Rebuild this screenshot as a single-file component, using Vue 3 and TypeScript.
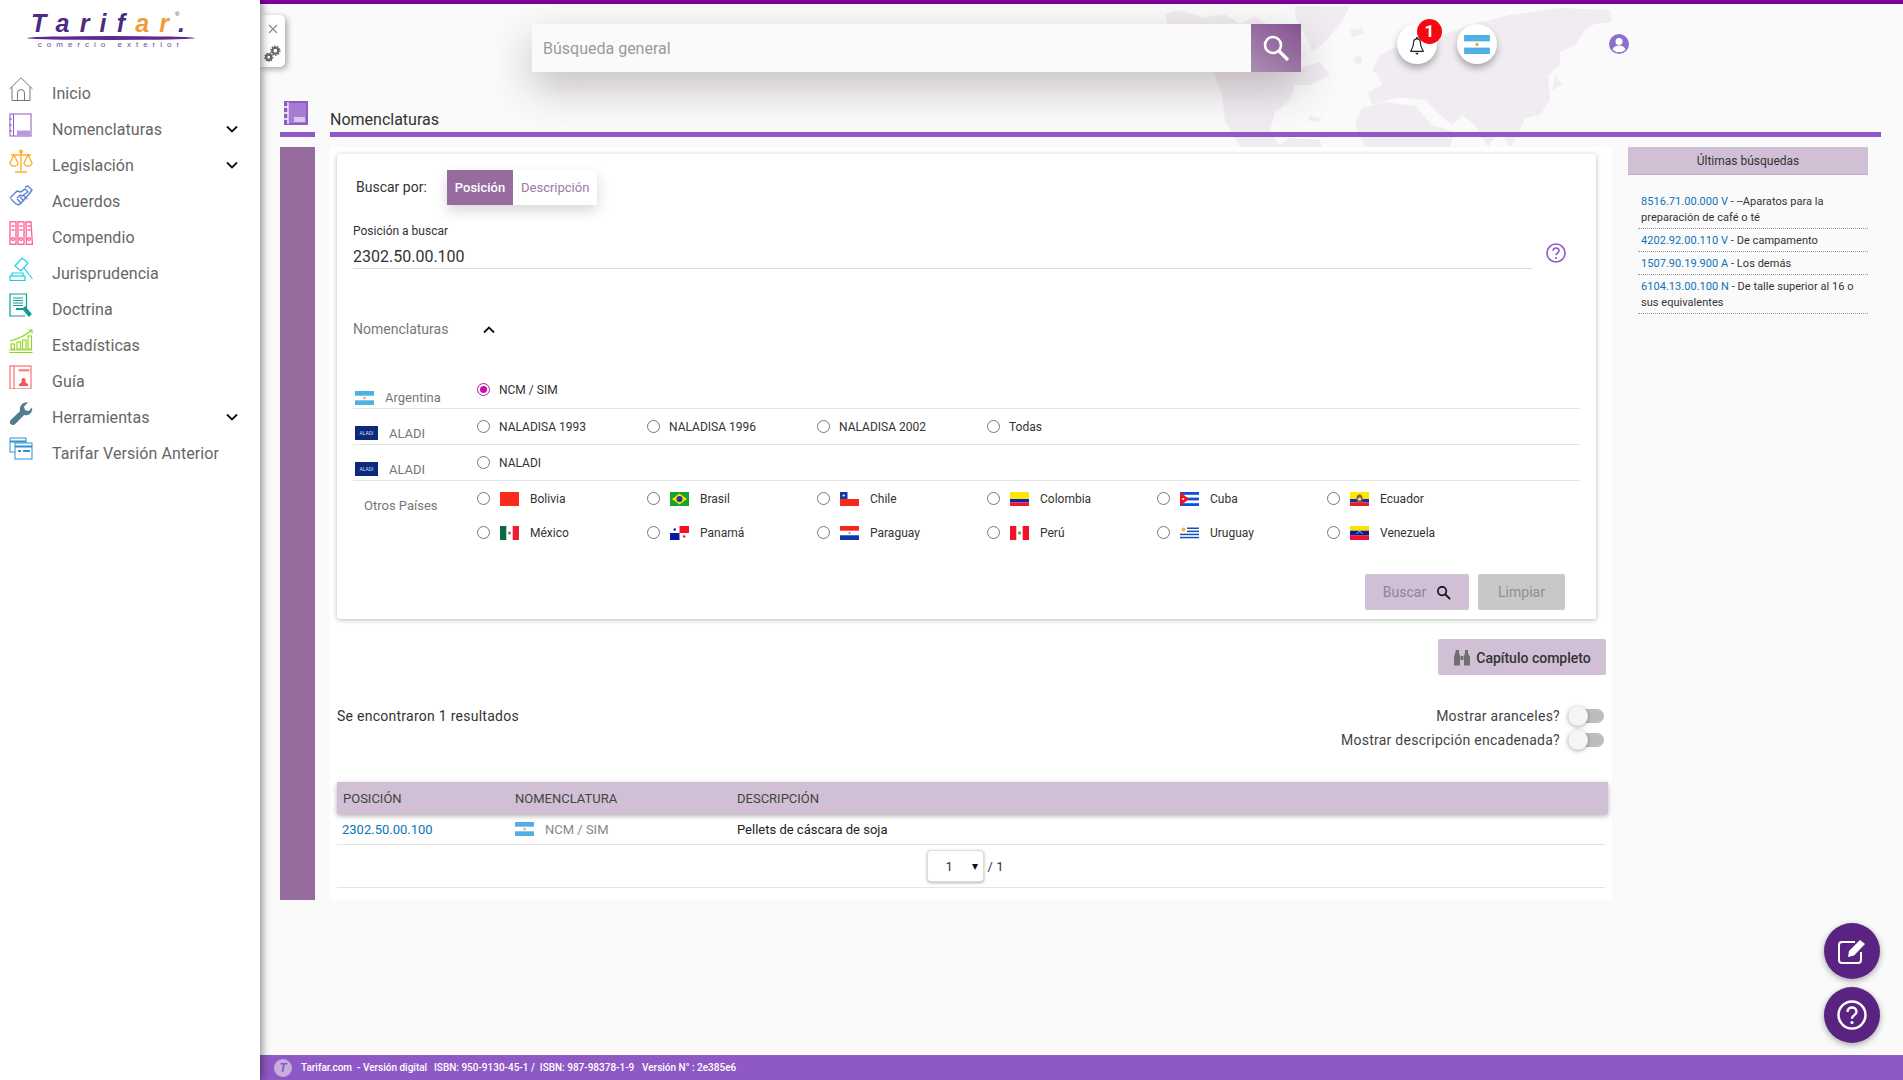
<script setup lang="ts">
const menu = [
  { label: 'Inicio', icon: 'home', arrow: false },
  { label: 'Nomenclaturas', icon: 'book', arrow: true },
  { label: 'Legislación', icon: 'scale', arrow: true },
  { label: 'Acuerdos', icon: 'hands', arrow: false },
  { label: 'Compendio', icon: 'books', arrow: false },
  { label: 'Jurisprudencia', icon: 'gavel', arrow: false },
  { label: 'Doctrina', icon: 'doc', arrow: false },
  { label: 'Estadísticas', icon: 'chart', arrow: false },
  { label: 'Guía', icon: 'guide', arrow: false },
  { label: 'Herramientas', icon: 'wrench', arrow: true },
  { label: 'Tarifar Versión Anterior', icon: 'windows', arrow: false },
]

const flagSvg: Record<string, string> = {
  ar: '<rect width="19" height="14" fill="#fff"/><rect width="19" height="4.7" fill="#4fb0e6"/><rect y="9.3" width="19" height="4.7" fill="#4fb0e6"/><circle cx="9.5" cy="7" r="1.2" fill="#f6a623"/>',
  bo: '<rect width="19" height="14" fill="#fb2a1b"/>',
  br: '<rect width="19" height="14" fill="#16a32f"/><path d="M9.5 1.5 17 7l-7.5 5.5L2 7z" fill="#fde100"/><circle cx="9.5" cy="7" r="3" fill="#1d3f96"/>',
  cl: '<rect width="19" height="14" fill="#fff"/><rect y="7" width="19" height="7" fill="#f6291b"/><rect width="7.5" height="7" fill="#1338a8"/><circle cx="3.7" cy="3.5" r="1.1" fill="#fff"/>',
  co: '<rect width="19" height="7" fill="#ffe600"/><rect y="7" width="19" height="3.5" fill="#1020b0"/><rect y="10.5" width="19" height="3.5" fill="#f0182a"/>',
  cu: '<rect width="19" height="14" fill="#fff"/><rect width="19" height="2.8" fill="#0a4fe0"/><rect y="5.6" width="19" height="2.8" fill="#0a4fe0"/><rect y="11.2" width="19" height="2.8" fill="#0a4fe0"/><path d="M0 0 9 7 0 14z" fill="#f5101e"/><circle cx="3.2" cy="7" r="1.1" fill="#fff"/>',
  ec: '<rect width="19" height="7" fill="#ffe600"/><rect y="7" width="19" height="3.5" fill="#1030b0"/><rect y="10.5" width="19" height="3.5" fill="#f0182a"/><ellipse cx="9.5" cy="7" rx="3" ry="4.5" fill="#8a5a3a"/><circle cx="9.5" cy="7" r="1.6" fill="#cfe3f0"/>',
  mx: '<rect width="19" height="14" fill="#fff"/><rect width="6.3" height="14" fill="#0b6b46"/><rect x="12.7" width="6.3" height="14" fill="#f01c32"/><circle cx="9.5" cy="7" r="1.5" fill="#9a6a3a"/>',
  pa: '<rect width="19" height="14" fill="#fff"/><rect x="9.5" width="9.5" height="7" fill="#fb0d1b"/><rect y="7" width="9.5" height="7" fill="#0a1aa8"/><circle cx="4.7" cy="3.5" r="1.2" fill="#0a1aa8"/><circle cx="14.2" cy="10.5" r="1.2" fill="#fb0d1b"/>',
  py: '<rect width="19" height="14" fill="#fff"/><rect width="19" height="4.7" fill="#f5271b"/><rect y="9.3" width="19" height="4.7" fill="#0a38a8"/><circle cx="9.5" cy="7" r="1" fill="#6a9a6a"/>',
  pe: '<rect width="19" height="14" fill="#fff"/><rect width="6.3" height="14" fill="#f6102a"/><rect x="12.7" width="6.3" height="14" fill="#f6102a"/><circle cx="9.5" cy="7" r="1.8" fill="#6aaa7a"/>',
  uy: '<rect width="19" height="14" fill="#fff"/><rect y="1.5" x="7" width="12" height="1.5" fill="#1850b8"/><rect y="4.6" x="7" width="12" height="1.5" fill="#1850b8"/><rect y="7.7" width="19" height="1.5" fill="#1850b8"/><rect y="10.8" width="19" height="1.5" fill="#1850b8"/><circle cx="3.5" cy="3.5" r="2" fill="#f0b93a"/>',
  ve: '<rect width="19" height="4.7" fill="#ffdf00"/><rect y="4.7" width="19" height="4.7" fill="#0a1e90"/><rect y="9.3" width="19" height="4.7" fill="#ee1038"/><path d="M6.5 8 9.5 5l3 3" fill="none" stroke="#fff" stroke-width=".7"/>',
}

const countries = [
  { name: 'Bolivia', code: 'bo' },
  { name: 'Brasil', code: 'br' },
  { name: 'Chile', code: 'cl' },
  { name: 'Colombia', code: 'co' },
  { name: 'Cuba', code: 'cu' },
  { name: 'Ecuador', code: 'ec' },
  { name: 'México', code: 'mx' },
  { name: 'Panamá', code: 'pa' },
  { name: 'Paraguay', code: 'py' },
  { name: 'Perú', code: 'pe' },
  { name: 'Uruguay', code: 'uy' },
  { name: 'Venezuela', code: 've' },
]

const recent = [
  { code: '8516.71.00.000 V', text: ' - --Aparatos para la preparación de café o té' },
  { code: '4202.92.00.110 V', text: ' - De campamento' },
  { code: '1507.90.19.900 A', text: ' - Los demás' },
  { code: '6104.13.00.100 N', text: ' - De talle superior al 16 o sus equivalentes' },
]
</script>

<template>
  <div class="app">
    <aside class="sidebar">
      <div class="logo">
        <div class="logo-word">Tarif<span class="logo-or">ar</span>.<span class="logo-r">®</span></div>
        <div class="logo-swoosh"></div>
        <div class="logo-sub">comercio exterior</div>
      </div>
      <nav class="menu">
        <div v-for="m in menu" :key="m.label" class="menu-item">
          <svg class="menu-icon" viewBox="0 0 24 24" fill="none" stroke-width="1">
            <g v-if="m.icon === 'home'" stroke="#777"><path d="M.5 12 12 .8 23.5 12"/><path d="M3 10v13.5h18V10"/><path d="M8.5 23.5V16a3.5 3.5 0 0 1 7 0v7.5"/></g>
            <g v-else-if="m.icon === 'book'" stroke="#8e59c5"><rect x="1" y="1" width="21" height="22"/><path d="M4.5 1v22M0 6h3M0 12h3M0 18h3"/><path d="M8 17.5h13v5H8z" fill="#b89ad9" stroke="none"/></g>
            <g v-else-if="m.icon === 'scale'" stroke="#fbae2c" stroke-width="1.3"><path d="M12 2v20M6 23h12M2 6h20"/><circle cx="12" cy="2.5" r="1.4"/><path d="M5 6 1 14a4 3 0 0 0 8 0zM19 6l-4 8a4 3 0 0 0 8 0z"/></g>
            <g v-else-if="m.icon === 'hands'" stroke="#5c7fd8" stroke-width="1.4"><path d="m1 13 7-7 4 1 4-3 3 3-6 4-2-1-3 3"/><path d="m16 2 3-1 4 4-2 3-8 9-3 3-3-1-5-5"/><path d="m8 14 4 4M11 12l4 4M14 10l4 4"/></g>
            <g v-else-if="m.icon === 'books'" stroke="#fb5f94" stroke-width="1.3"><rect x="1" y=".8" width="6" height="22.500"/><rect x="9" y=".8" width="6" height="22.500"/><path d="m17 1 5-.2 1.400 22.500h-6z"/><path d="M2.500 5h3M10.500 5h3M18.500 5h3M2.500 9h3M10.500 9h3M18.500 9h3"/><circle cx="4" cy="18" r="1.400"/><circle cx="12" cy="18" r="1.400"/><circle cx="20" cy="18" r="1.400"/></g>
            <g v-else-if="m.icon === 'gavel'" stroke="#1ccfe8" stroke-width="1.2"><rect x="1" y="19" width="15" height="4.500"/><path d="M3 19v-3h11v3"/><path d="m6 9 7-8 6 5-7 8zM15 11l8.500 11"/></g>
            <g v-else-if="m.icon === 'doc'" stroke="#0a9f91" stroke-width="1.2"><path d="M17.500 17V1H1v22h15"/><path d="M4 5h10M4 7.500h10M4 10h10M4 12.500h10"/><path d="M7 16h7" stroke-width="2"/><path d="m16 14 6 7-2 2-6-7z" fill="#0a9f91"/></g>
            <g v-else-if="m.icon === 'chart'" stroke="#8fd31a" stroke-width="1.1"><path d="M.5 23.500h23M.5 21h23"/><rect x="2" y="15" width="3.500" height="5"/><rect x="8" y="13" width="3.500" height="7"/><rect x="13.500" y="11" width="3.500" height="9"/><rect x="19" y="7" width="3.500" height="13"/><path d="M1 12C9 10 16 7 23 1"/><path d="M19.500 1H23v3.500"/></g>
            <g v-else-if="m.icon === 'guide'" stroke="#f55656"><rect x="1" y="1" width="21" height="23"/><path d="M5 1v23"/><path d="M9.500 4h11v2.500h-11z" fill="#f89090" stroke="none"/><path d="M10 21h9v-2l-2.500-1.500V15a2 2 0 0 0-4 0v2.500L10 19z" fill="#f55656" stroke="none"/></g>
            <path v-else-if="m.icon === 'wrench'" d="M23 6.500c.6 2.500-.2 5-2.200 6.500-1.700 1.300-3.800 1.500-5.700.9L6 23.200c-1.300 1.200-3.200 1.100-4.400-.1-1.100-1.200-1-3 .2-4.200l9.300-9c-.7-2-.3-4.300 1.200-6C14 1.800 16.700.7 19.200 1.300L15 5.500l1 3.700 3.800.9z" fill="#527d93"/>
            <g v-else stroke="#2c93d2"><rect x="1" y="1" width="16" height="14"/><path d="M1 4.500h16" stroke-width="2"/><rect x="6" y="6" width="17" height="16" fill="#fff"/><path d="M6 9.500h17" stroke-width="2"/><path d="M9 14h3M14 14h7" stroke-width="2"/></g>
          </svg>
          <span class="menu-label">{{ m.label }}</span>
          <svg v-if="m.arrow" class="menu-chev" viewBox="0 0 12 8"><path d="M1 1.500 6 6.500l5-5" fill="none" stroke="#111" stroke-width="1.800"/></svg>
        </div>
      </nav>
    </aside>

    <main class="main">
      <svg class="worldmap" viewBox="1160 4 470 143" aria-hidden="true">
        <g fill="#f0ecf2">
          <path d="M1165 14l13-4 22 6v29l-15-5-13 12-7 10 5-17-6-7 4-10z"/>
          <path d="M1200 18l25-4 15 10 15-8 20 14 15 4 10 14-10 14 10 6 20-6 10 13-20 10h-15l-5 15-15 12-5 18 10 17h-40l-15-27-3-25-12-35-10-15z"/>
          <path d="M1295 6h55l-10 18-15 18-13 10-6-16-10-16z"/>
          <path d="M1350 30l12-2 2 5-12 4z"/>
          <path d="M1372 70l8-15 15-7 20 2 15-10 40-15 40-10 50-7 50 2 2 12-17 2-10 6-10 15-15 7v13l-12 10 2 25-10 15-15 3-7 17-8 12-10-17-12 17-13-22-13-10-10 10-12-10-15-15-17-2-13 0-23 7-4-13 14-7-4-10z"/>
          <path d="M1362 108l23-6 30 4 17 19 23 7-5 15h-85l-10-22z"/>
          <path d="M1276 147l14-9 30 2 2 7z"/>
          <path d="M1556 75l6 10-10 5 2-8zM1354 58l7-4 1 8-6 3z"/>
          <path d="M1310 116l12 3-4 3-10-2z"/>
        </g>
      </svg>

      <div class="topline"></div>

      <header class="topbar">
        <div class="search">
          <div class="search-input">Búsqueda general</div>
          <button class="search-btn" type="button" aria-label="Buscar">
            <svg viewBox="0 0 30 30" width="30" height="30"><circle cx="12" cy="12" r="8" fill="none" stroke="#fff" stroke-width="2.600"/><path d="m18 18 9 9" stroke="#fff" stroke-width="3.200"/></svg>
          </button>
        </div>
        <div class="round bell">
          <svg class="bell-icon" viewBox="0 0 18 22" width="16" height="20"><path d="M9 3c3 0 4 2.500 4 5.500 0 4 2.500 6.500 3 8.500H2c.5-2 3-4.500 3-8.500C5 5.500 6 3 9 3z" fill="none" stroke="#222" stroke-width="1.300"/><path d="M7 18.500h4l-2 2.500zM8 1h2v2H8z" fill="#222"/></svg>
          <span class="badge">1</span>
        </div>
        <div class="round flagbtn">
          <svg viewBox="0 0 19 14" width="26" height="19"><g v-html="flagSvg.ar"></g></svg>
        </div>
        <svg class="user" viewBox="0 0 20 20"><circle cx="10" cy="10" r="10" fill="#8f6fce"/><circle cx="10" cy="7.500" r="3.500" fill="#fff"/><path d="M3.500 15.500c1-3 3.500-4 6.500-4s5.500 1 6.500 4a9 9 0 0 1-13 0z" fill="#fff"/></svg>
      </header>

      <div class="titlerow">
        <div class="title-icon">
          <svg viewBox="0 0 24 24" width="24" height="24" fill="none" stroke="#8e59c5" stroke-width="1.300"><rect x=".7" y=".7" width="22.600" height="22.600" fill="#8e59c5"/><rect x="5" y="2" width="17" height="20" fill="#a57bd3" stroke="none"/><path d="M4 1v22" stroke="#fff"/><path d="M0 6h4M0 12h4M0 18h4" stroke="#fff"/><path d="M10 16h11v5H10z" fill="#d8c7ea" stroke="none"/></svg>
        </div>
        <h1 class="title">Nomenclaturas</h1>
      </div>

      <div class="content">
        <div class="sidebar-strip"></div>
        <section class="panel">
          <div class="card">
            <div class="tabs-row">
              <span class="tabs-label">Buscar por:</span>
              <div class="tabs">
                <span class="tab active">Posición</span>
                <span class="tab">Descripción</span>
              </div>
            </div>

            <div class="field">
              <div class="field-main">
                <div class="field-label">Posición a buscar</div>
                <div class="field-value">2302.50.00.100</div>
              </div>
              <svg class="field-help" viewBox="0 0 20 20"><circle cx="10" cy="10" r="9" fill="none" stroke="#8e59c5" stroke-width="1.600"/><path d="M7 7.800C7 5.800 8.500 5 10 5s3 1 3 2.800c0 2.200-3 2.200-3 4.400" fill="none" stroke="#8e59c5" stroke-width="1.600"/><circle cx="10" cy="15" r="1.100" fill="#8e59c5"/></svg>
            </div>

            <div class="acc">
              <span>Nomenclaturas</span>
              <svg viewBox="0 0 12 8" width="12" height="8"><path d="M1 6.500 6 1.500l5 5" fill="none" stroke="#111" stroke-width="1.800"/></svg>
            </div>

            <div class="nrow">
              <div class="nrow-left nrow-ar">
                <svg class="lflag" viewBox="0 0 19 14"><g v-html="flagSvg.ar"></g></svg>
                <span>Argentina</span>
              </div>
              <div class="opts">
                <label class="opt"><span class="radio on"></span>NCM / SIM</label>
              </div>
            </div>
            <div class="nrow">
              <div class="nrow-left">
                <span class="aladi">ALADI</span>
                <span>ALADI</span>
              </div>
              <div class="opts">
                <label class="opt"><span class="radio"></span>NALADISA 1993</label>
                <label class="opt"><span class="radio"></span>NALADISA 1996</label>
                <label class="opt"><span class="radio"></span>NALADISA 2002</label>
                <label class="opt"><span class="radio"></span>Todas</label>
              </div>
            </div>
            <div class="nrow">
              <div class="nrow-left">
                <span class="aladi">ALADI</span>
                <span>ALADI</span>
              </div>
              <div class="opts">
                <label class="opt"><span class="radio"></span>NALADI</label>
              </div>
            </div>
            <div class="nrow nrow-last">
              <div class="nrow-left otros">Otros Países</div>
              <div class="opts grid-opts">
                <label v-for="c in countries" :key="c.code" class="opt">
                  <span class="radio"></span>
                  <svg class="cflag" viewBox="0 0 19 14"><g v-html="flagSvg[c.code]"></g></svg>
                  {{ c.name }}
                </label>
              </div>
            </div>

            <div class="actions">
              <button class="btn btn-buscar" type="button">
                Buscar
                <svg viewBox="0 0 16 16" width="15" height="15"><circle cx="6.500" cy="6.500" r="4.500" fill="none" stroke="#111" stroke-width="1.800"/><path d="m10 10 5 5" stroke="#111" stroke-width="2"/></svg>
              </button>
              <button class="btn btn-limpiar" type="button">Limpiar</button>
            </div>
          </div>

          <div class="chapter-row">
            <button class="btn-chapter" type="button">
              <svg viewBox="0 0 18 18" width="18" height="18"><path d="M3 1h3v3l1 3v9.500H1V8zM12 1h3v3l2 4v8.500h-6V7l1-3zM7.500 7h3v4h-3z" fill="#6f6f6f"/></svg>
              Capítulo completo
            </button>
          </div>

          <div class="results-row">
            <span class="results">Se encontraron 1 resultados</span>
            <div class="toggles">
              <div class="toggle-row"><span>Mostrar aranceles?</span><span class="switch"></span></div>
              <div class="toggle-row"><span>Mostrar descripción encadenada?</span><span class="switch"></span></div>
            </div>
          </div>

          <div class="table">
            <div class="thead">
              <div class="c1">POSICIÓN</div>
              <div class="c2">NOMENCLATURA</div>
              <div class="c3">DESCRIPCIÓN</div>
            </div>
            <div class="trow">
              <div class="c1 link">2302.50.00.100</div>
              <div class="c2 nom">
                <svg class="tflag" viewBox="0 0 19 14"><g v-html="flagSvg.ar"></g></svg>
                NCM / SIM
              </div>
              <div class="c3">Pellets de cáscara de soja</div>
            </div>
            <div class="pager">
              <div class="select"><span>1</span><span class="caret">▾</span></div>
              <span class="pages">/ 1</span>
            </div>
          </div>
        </section>

        <section class="recent">
          <div class="recent-head">Últimas búsquedas</div>
          <ul class="recent-list">
            <li v-for="r in recent" :key="r.code"><span class="link">{{ r.code }}</span>{{ r.text }}</li>
          </ul>
        </section>
      </div>

      <footer class="footer">
        <span class="foot-logo">T</span>
        <span class="foot-a">Tarifar.com&nbsp; - Versión digital</span>
        <span class="foot-b">ISBN: 950-9130-45-1 /&nbsp; ISBN: 987-98378-1-9</span>
        <span class="foot-c">Versión N° : 2e385e6</span>
      </footer>

      <div class="toolbox">
        <svg viewBox="0 0 10 10" width="10" height="10"><path d="m1 1 8 8M9 1 1 9" stroke="#888" stroke-width="1.100"/></svg>
        <svg viewBox="0 0 18 18" width="17" height="17" fill="none" stroke="#666" stroke-width="2.400"><circle cx="12" cy="6" r="3.200"/><circle cx="5" cy="13" r="2.700"/><circle cx="12" cy="6" r="4.800" stroke-dasharray="1.500 1.500" stroke-width="1.500"/><circle cx="5" cy="13" r="4.200" stroke-dasharray="1.500 1.300" stroke-width="1.300"/></svg>
      </div>

      <div class="fabs">
        <button class="fab" type="button" aria-label="Editar">
          <svg viewBox="0 0 30 30" width="30" height="30" fill="none" stroke="#fff" stroke-width="2"><path d="M24 16v8a3 3 0 0 1-3 3H5a3 3 0 0 1-3-3V9a3 3 0 0 1 3-3h13"/><path d="m11 21 1-6L23 4l5 4-11 11.500z" fill="#fff" stroke="none"/></svg>
        </button>
        <button class="fab" type="button" aria-label="Ayuda">
          <svg viewBox="0 0 30 30" width="30" height="30" fill="none" stroke="#fff" stroke-width="2.400"><circle cx="15" cy="15" r="13.500"/><path d="M10.500 12c0-3 2-4.500 4.500-4.500s4.500 1.700 4.500 4.200c0 3.600-4.500 3.300-4.500 7"/><circle cx="15" cy="22.500" r="1.600" fill="#fff" stroke="none"/></svg>
        </button>
      </div>
    </main>
  </div>
</template>

<style>
html, body { margin: 0; padding: 0; background: #fafafa; }
</style>

<style scoped>
.app {
  display: flex;
  width: 100%;
  height: 1080px;
  overflow: hidden;
  font-family: Roboto, "Liberation Sans", sans-serif;
  color: #333;
}
button { font-family: inherit; border: 0; cursor: pointer; }

/* Sidebar */
.sidebar {
  flex: 0 0 260px;
  background: #fff;
  box-shadow: 2px 0 8px rgba(0, 0, 0, .45);
  z-index: 5;
}
.logo { width: 168px; margin: 11px 0 0 27px; height: 64px; }
.logo-word {
  position: relative;
  font-family: "Liberation Sans", sans-serif;
  font-weight: 700;
  font-style: italic;
  font-size: 25px;
  line-height: 24px;
  letter-spacing: 10.2px;
  color: #4d2a84;
  padding-left: 4px;
  white-space: nowrap;
}
.logo-or { color: #f29a38; }
.logo-r {
  position: absolute;
  left: 148px;
  top: -1px;
  font-size: 6px;
  line-height: 8px;
  font-style: normal;
  font-weight: 400;
  letter-spacing: 0;
}
.logo-swoosh { height: 4px; background: #5b2c8e; border-radius: 50%; margin-top: 1px; }
.logo-sub {
  font-size: 8px;
  line-height: 10px;
  letter-spacing: 5px;
  color: #6b4a96;
  text-align: center;
  white-space: nowrap;
  font-family: "Liberation Sans", sans-serif;
}
.menu { display: flex; flex-direction: column; }
.menu-item { display: flex; align-items: center; height: 36px; }
.menu-icon { width: 24px; height: 24px; margin: -9px 19px 0 9px; flex: none; }
.menu-label { font-size: 16px; color: #666; flex: 1; margin-top: 1px; white-space: nowrap; letter-spacing: .08px; }
.menu-chev { width: 12px; height: 8px; margin-right: 22px; }

/* Main */
.main { flex: 1; display: flex; flex-direction: column; position: relative; min-width: 0; }
.worldmap { position: absolute; left: 900px; top: 4px; width: 470px; height: 143px; z-index: 0; }
.topline { height: 4px; background: #7b0099; flex: none; position: relative; }
.topbar {
  display: flex;
  align-items: flex-start;
  height: 91px;
  flex: none;
  padding: 20px 0 0 272px;
  box-sizing: border-box;
  position: relative;
}
.search {
  display: flex;
  width: 769px;
  height: 48px;
  box-shadow: 0 16px 40px rgba(60, 40, 40, .28);
}
.search-input {
  flex: 1;
  background: #fafafa;
  color: #9a9a9a;
  font-size: 16px;
  line-height: 50px;
  padding-left: 11px;
}
.search-btn {
  width: 50px;
  padding: 0;
  background: linear-gradient(35deg, #ab8db3, #85528f);
  display: flex;
  align-items: center;
  justify-content: center;
}
.round {
  width: 40px;
  height: 40px;
  border-radius: 50%;
  background: #fff;
  box-shadow: 0 4px 7px rgba(0, 0, 0, .3);
  display: flex;
  align-items: center;
  justify-content: center;
  position: relative;
}
.bell { margin-left: 96px; }
.bell-icon { margin-top: 4px; }
.flagbtn { margin-left: 20px; }
.badge {
  position: absolute;
  right: -5px;
  top: -5px;
  width: 25px;
  height: 25px;
  border-radius: 50%;
  background: #f60812;
  color: #fff;
  font-size: 17px;
  font-weight: 700;
  line-height: 25px;
  text-align: center;
}
.user { width: 20px; height: 20px; margin: 10px 0 0 112px; }

.titlerow { display: flex; padding-left: 20px; flex: none; height: 42px; position: relative; }
.title-icon {
  width: 35px;
  border-bottom: 5px solid #8e59c5;
  padding: 6px 0 0 4px;
  box-sizing: border-box;
  margin-right: 15px;
  flex: none;
}
.title {
  width: 1551px;
  margin: 0;
  font-size: 16px;
  font-weight: 400;
  line-height: 24px;
  color: #333;
  padding-top: 13px;
  box-sizing: border-box;
  border-bottom: 5px solid #8e59c5;
}

.content { display: flex; margin: 10px 0 0 20px; height: 753px; position: relative; flex: none; }
.sidebar-strip { width: 35px; background: #966c9e; margin-right: 15px; flex: none; }
.panel { width: 1282px; flex: none; background: #fff; padding: 7px 0 0 7px; box-sizing: border-box; }

.card {
  width: 1259px;
  height: 465px;
  background: #fff;
  border-radius: 3px;
  box-shadow: 0 1px 5px rgba(0, 0, 0, .28);
  padding: 16px 0 0 16px;
  box-sizing: border-box;
}
.tabs-row { display: flex; align-items: center; height: 35px; }
.tabs-label { font-size: 14px; color: #333; width: 94px; padding: 0 0 1px 3px; box-sizing: border-box; }
.tabs { display: flex; box-shadow: 0 6px 14px rgba(0, 0, 0, .16); }
.tab { height: 35px; line-height: 35px; font-size: 13px; color: #9a78a8; background: #fff; padding: 0 8px; }
.tab.active { background: #966c9e; color: #fff; font-weight: 500; width: 66px; padding: 0; text-align: center; }

.field { display: flex; margin-top: 19px; align-items: flex-end; }
.field-main { width: 1179px; border-bottom: 1px solid #ddd; }
.field-label { font-size: 12px; line-height: 14px; color: #333; }
.field-value { font-size: 16px; line-height: 24px; margin-top: 7px; margin-bottom: -1px; color: #333; }
.field-help { width: 20px; height: 20px; margin: 0 0 6px 14px; }

.acc {
  display: flex;
  align-items: center;
  font-size: 14px;
  color: #777;
  margin-top: 50px;
  height: 20px;
  gap: 35px;
}
.acc svg { margin-top: 1px; }

.nrow {
  display: flex;
  width: 1227px;
  height: 36px;
  border-bottom: 1px solid #e4e4e4;
  box-sizing: border-box;
}
.acc + .nrow { margin-top: 33px; height: 37px; }
.acc + .nrow .nrow-left { padding-top: 15px; }
.nrow-left {
  width: 124px;
  flex: none;
  font-size: 13px;
  color: #777;
  display: flex;
  align-items: center;
  padding: 13px 0 0 2px;
  box-sizing: border-box;
}
.lflag { width: 19px; height: 14px; margin-right: 11px; }
.aladi {
  width: 23px;
  height: 14px;
  background: #0a2a80;
  color: #ddd;
  font-size: 5px;
  line-height: 14px;
  text-align: center;
  margin-right: 11px;
}
.opts { display: flex; align-items: center; height: 34px; margin-top: 1px; }
.opt {
  width: 170px;
  display: flex;
  align-items: center;
  font-size: 12px;
  color: #333;
  white-space: nowrap;
}
.radio {
  width: 13px;
  height: 13px;
  border: 1.500px solid #777;
  border-radius: 50%;
  box-sizing: border-box;
  margin-right: 9px;
  flex: none;
  position: relative;
  top: -1px;
}
.radio.on { border-color: #c30fb0; }
.radio.on::after {
  content: "";
  position: absolute;
  inset: 2px;
  background: #c30fb0;
  border-radius: 50%;
}
.grid-opts > .opt > .radio { margin-right: 10px; }
.cflag { width: 19px; height: 14px; margin-right: 11px; flex: none; }
.nrow-last { border: 0; height: 68px; }
.otros { padding: 0 0 14px 11px; height: 62px; }
.grid-opts {
  display: grid;
  grid-template-columns: repeat(6, 170px);
  grid-auto-rows: 34px;
  height: 68px;
}

.actions { display: flex; gap: 9px; margin: 25px 0 0 1012px; }
.btn {
  height: 36px;
  border-radius: 2px;
  font-size: 14px;
  padding: 0;
  display: flex;
  align-items: center;
  justify-content: center;
}
.btn-buscar { width: 104px; background: #d1bfd5; color: #8f8296; gap: 10px; }
.btn-limpiar { width: 87px; background: #c8c8c8; color: #8f8f8f; }

.chapter-row { display: flex; justify-content: flex-end; margin-top: 20px; width: 1269px; }
.btn-chapter {
  width: 168px;
  height: 36px;
  background: #d1bfd5;
  border-radius: 2px;
  font-size: 14px;
  font-weight: 500;
  color: #333;
  display: flex;
  align-items: center;
  justify-content: center;
  gap: 5px;
  padding: 2px 0 0;
}

.results-row {
  display: flex;
  justify-content: space-between;
  width: 1267px;
  margin-top: 28px;
  font-size: 14px;
  letter-spacing: .26px;
}
.results { line-height: 24px; color: #333; margin-top: 1px; }
.toggles { display: flex; flex-direction: column; padding-top: 1px; }
.toggle-row { display: flex; align-items: center; justify-content: flex-end; gap: 8px; height: 24px; color: #444; }
.switch {
  width: 36px;
  height: 14px;
  border-radius: 7px;
  background: #bdbdbd;
  position: relative;
}
.switch::before {
  content: "";
  position: absolute;
  left: 0;
  top: -3px;
  width: 20px;
  height: 20px;
  border-radius: 50%;
  background: #f5f5f5;
  box-shadow: 0 1px 4px rgba(0, 0, 0, .35);
}

.table { width: 1271px; margin-top: 30px; font-size: 13px; }
.thead {
  display: flex;
  height: 32px;
  align-items: center;
  background: #d1bfd5;
  color: #444;
  box-shadow: 0 2px 5px rgba(0, 0, 0, .3);
  padding-top: 1px;
  box-sizing: border-box;
}
.c1 { width: 178px; padding-left: 6px; box-sizing: border-box; flex: none; }
.c2 { width: 222px; flex: none; }
.c3 { flex: 1; }
.trow {
  display: flex;
  width: 1268px;
  height: 31px;
  align-items: center;
  border-bottom: 1px solid #e4e4e4;
  box-sizing: border-box;
  font-size: 13px;
  color: #222;
}
.trow .c1 { padding-left: 5px; }
.link { color: #0a74b8; }
.nom { display: flex; align-items: center; color: #888; }
.tflag { width: 19px; height: 14px; margin-right: 11px; }
.pager {
  display: flex;
  width: 1268px;
  align-items: center;
  justify-content: center;
  height: 43px;
  border-bottom: 1px solid #e4e4e4;
  box-sizing: border-box;
  font-size: 13px;
  color: #333;
  padding-right: 12px;
}
.select {
  width: 57px;
  height: 32px;
  box-sizing: border-box;
  border: 1px solid #ddd;
  border-radius: 4px;
  box-shadow: 0 1px 3px rgba(0, 0, 0, .3);
  background: #fff;
  display: flex;
  align-items: center;
  justify-content: space-between;
  padding: 0 5px 0 18px;
  margin-right: 4px;
}
.caret { font-size: 12px; color: #111; }

.recent { width: 240px; margin-left: 16px; flex: none; }
.recent-head {
  height: 28px;
  line-height: 28px;
  background: #d1bfd5;
  border-bottom: 1px dotted #aaa;
  box-sizing: border-box;
  text-align: center;
  font-size: 12px;
  color: #333;
}
.recent-list { list-style: none; margin: 19px 0 0 10px; padding: 0; font-size: 11px; line-height: 16px; color: #333; letter-spacing: .04px; }
.recent-list li { border-bottom: 1px dotted #999; padding: 0 3px 2px; margin-bottom: 4px; }

.footer {
  margin-top: auto;
  height: 25px;
  background: #8e59c5;
  color: #fff;
  font-size: 10px;
  font-weight: 500;
  display: flex;
  align-items: center;
  padding-left: 14px;
  flex: none;
  position: relative;
}
.foot-logo {
  width: 18px;
  height: 18px;
  border-radius: 50%;
  background: #c9aedc;
  color: #8e59c5;
  font-size: 12px;
  font-weight: 700;
  font-style: italic;
  text-align: center;
  line-height: 18px;
  margin-right: 9px;
}
.foot-a { width: 133px; }
.foot-b { width: 208px; }

.toolbox {
  position: absolute;
  left: 0;
  top: 15px;
  width: 25px;
  height: 52px;
  background: #fff;
  border-radius: 0 5px 5px 0;
  box-shadow: 2px 2px 6px rgba(0, 0, 0, .35);
  display: flex;
  flex-direction: column;
  align-items: center;
  justify-content: space-between;
  padding: 9px 0 5px;
  box-sizing: border-box;
  z-index: 3;
}
.fabs {
  position: absolute;
  right: 23px;
  bottom: 37px;
  display: flex;
  flex-direction: column;
  gap: 8px;
  z-index: 4;
}
.fab {
  width: 56px;
  height: 56px;
  border-radius: 50%;
  padding: 0;
  background: #5a2382;
  box-shadow: 0 2px 6px rgba(0, 0, 0, .35);
  display: flex;
  align-items: center;
  justify-content: center;
}
</style>
